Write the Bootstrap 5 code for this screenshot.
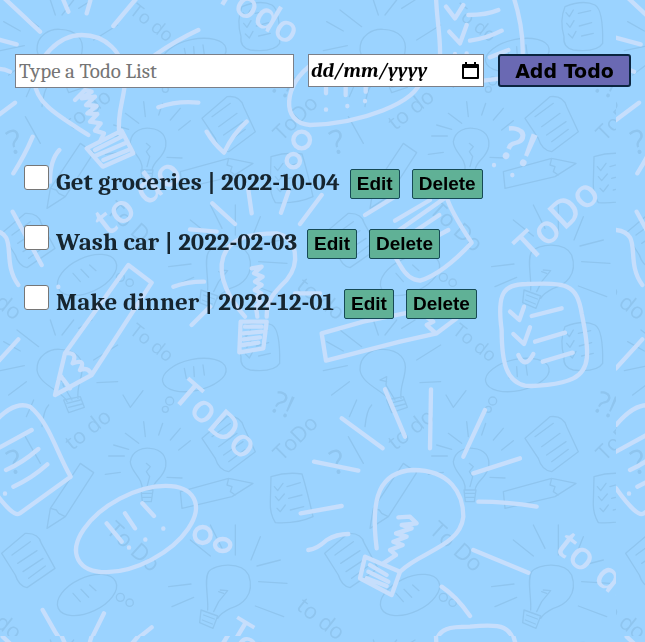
<!DOCTYPE html>
<html lang="en">
<head>
<meta charset="utf-8">
<meta name="viewport" content="width=device-width, initial-scale=1">
<title>Todo List</title>
<link href="https://cdn.jsdelivr.net/npm/bootstrap@5.3.0/dist/css/bootstrap.min.css" rel="stylesheet">
<style>
body { background: #9bd3ff; color: #16252f; font-family: Cambria, "Noto Serif", "Liberation Serif", serif; }
.doodles { z-index: -1; }
.doodles text { font-family: "Open Sans", sans-serif; stroke: none; }
.todo-form { padding: 54px 14px 0 15px; gap: 14px; }
.field { height: 34px; background: #fff; border: 1px solid #7b7f88; border-radius: 0; color: #000; font-size: 21px; line-height: 24px; padding: 1px 3px; outline-offset: 0; }
.field::placeholder { color: #757575; opacity: 1; }
.date-group { width: 176px; height: 33px; background: #fff; border: 1px solid #7b7f88; }
.date-field { min-width: 0; border: 0; padding: 0 0 0 2px; font-size: 20px; font-weight: 700; font-style: italic; color: #000; background: transparent; }
.date-field::placeholder { color: #000; opacity: 1; }
.pick { border: 0; background: transparent; padding: 0 4px 0 0; line-height: 1; }
.add-btn { width: 133px; height: 33px; padding: 0; border: 2px solid #0b2540; border-radius: 3px; background: #6a69b3; color: #000; font: 700 19px/24px "DejaVu Sans", sans-serif; }
.add-btn:hover { background: #5b5aa6; color: #000; }
.todo-list { padding: 76px 14px 0 24px; }
.todo-item { height: 60px; }
.tick { appearance: none; width: 25px; height: 25px; margin: 1px 7px 0 0; background: #fff; border: 1px solid #767676; border-radius: 3px; }
.tick:checked { background: #6a69b3; }
.todo-text { font-size: 25px; line-height: 30px; font-weight: 700; margin: 3px 10px 0 0; }
.act { height: 30px; margin: 5px 12px 0 0; padding: 0 6px; border: 1px solid #164a56; border-radius: 2px; background: #60b196; color: #000; font: 700 19px/26px "Liberation Sans", Arial, sans-serif; }
.act:hover { background: #4f9f85; color: #000; }
</style>
</head>
<body class="min-vh-100">
<svg class="doodles position-fixed top-0 start-0 w-100 h-100" aria-hidden="true">
  <defs>
    <g id="sketch" transform="scale(.333333)">
      <!-- bulb, top left -->
      <path d="M210 245C200 215 125 195 120 150C118 105 160 85 190 88C240 90 262 120 255 155C250 190 240 200 243 235M200 240L250 230L262 262L215 278ZM210 250L250 240M215 262L255 252M180 180L200 170L198 195L225 240M180 180L200 185M20 65L70 93M60 30L125 80M160 0L175 45M230 0L195 45M285 0L245 25M290 120L362 75M300 188L362 185M10 152L82 137M35 225L88 185"/>
      <path d="M735 20Q790 -2 825 15Q850 30 848 130Q830 158 760 150Q728 142 732 110Q718 60 735 20ZM738 38L748 50L760 30M775 40L812 32M740 70L750 82L762 62M778 78L815 68M745 102L757 114L768 94M785 108L820 100"/>
      <ellipse cx="592" cy="165" rx="97" ry="47" transform="rotate(-12 592 165)"/>
      <path d="M562 145L568 175M590 140L592 170M618 135L622 165M378 225L400 262L438 212M110 240L88 290M155 255Q140 270 135 320"/>
      <circle cx="518" cy="243" r="12"/><circle cx="505" cy="268" r="9"/>
      <!-- small bulb -->
      <path d="M435 510C440 475 400 455 400 425C405 390 440 382 460 385C495 388 510 410 506 440C500 475 470 480 465 510M432 510L468 510L463 545L436 545ZM436 520H464M438 532H462M448 430L460 440L448 455L458 470L450 500M440 305L445 350M497 310L485 345M550 325L520 360M580 362L545 390M385 340L425 370M350 375L395 388M335 408H382M325 463L370 457M510 472L555 474"/>
      <path d="M615 355L690 290Q730 285 740 320L775 395L695 455Q665 450 655 415ZM645 350L700 310M665 380L720 340M680 405L738 365M695 425L745 388M85 350L130 430"/>
      <!-- pencils -->
      <path d="M150 625L160 565L250 430L290 458L205 590ZM160 565L178 570L185 580L205 590M550 515L695 475L768 490L705 530L555 565ZM695 475L690 495L705 500L700 515L715 525"/>
      <path d="M822 470Q870 455 915 462Q930 510 948 590Q900 612 835 608Q818 580 820 545ZM832 500L842 512L858 490M870 500L910 488M835 530L845 542L862 522M875 535L915 525M840 565L850 575L865 555M880 570L920 560"/>
      <path d="M14 700L85 640Q125 638 133 670L174 745L90 803Q65 798 55 765ZM45 705L100 665M62 730L120 692M78 755L138 715M95 775L145 738"/>
      <ellipse cx="270" cy="825" rx="95" ry="52" transform="rotate(-25 270 825)"/>
      <path d="M228 820L250 845M252 808L275 832M278 795L297 812"/>
      <circle cx="370" cy="832" r="12"/><circle cx="398" cy="848" r="11"/>
      <!-- bulb, lower right -->
      <path d="M632 870C635 830 620 780 635 755C655 730 735 725 755 765C775 825 735 855 700 865Q670 880 662 895M612 870L662 888L648 925L608 908ZM620 885L652 897M616 900L646 912M670 810L692 812L665 845L650 875M665 815L680 820M640 615L675 685M715 615V705M790 650L762 720M580 660L640 708M780 738L850 720M515 800L582 792M785 785L870 790M525 860L590 832M775 858L860 890"/>
      <g fill="#8fc5ef">
        <text x="395" y="38" font-size="56" transform="rotate(38 395 38)">To do</text>
        <text x="225" y="393" font-size="64" transform="rotate(-38 225 393)">to do</text>
        <text x="815" y="270" font-size="92" transform="rotate(24 815 270)">?!</text>
        <text x="855" y="425" font-size="64" transform="rotate(-45 855 425)">ToDo</text>
        <text x="40" y="465" font-size="100" transform="rotate(-15 40 465)">?</text>
        <text x="325" y="635" font-size="68" transform="rotate(42 325 635)">To Do</text>
        <text x="895" y="865" font-size="66" transform="rotate(38 895 865)">to do</text>
      </g>
    </g>
    <pattern id="wall" x="-8" y="-4" width="624" height="640" patternUnits="userSpaceOnUse">
      <g transform="translate(8 4)" fill="none" stroke-linecap="round" stroke-linejoin="round">
        <g stroke="#8fc5ef" stroke-width="4">
          <use href="#sketch" x="-3" y="-320"/><use href="#sketch" x="320" y="-320"/>
          <use href="#sketch" x="-326"/><use href="#sketch" x="-3"/><use href="#sketch" x="320"/>
          <use href="#sketch" x="-326" y="320"/><use href="#sketch" x="-3" y="320"/><use href="#sketch" x="320" y="320"/>
        </g>
        <g transform="scale(.333333)" stroke="#c6defc" stroke-width="13">
          <g>
            <path d="M8 -10L120 95M-30 112L50 133M185 -12L205 35M275 -12L260 40M415 -12L340 78M465 165Q530 120 595 90M475 322Q530 302 595 308"/>
            <path d="M265 405C180 350 105 310 105 245C110 170 180 105 245 105C310 105 375 150 375 245C372 300 350 340 358 400M260 445L365 392L400 460L308 500ZM285 450L365 410M285 468L375 430M310 480L385 450"/>
            <path d="M225 300L255 270L275 275L245 295L285 290L258 315L290 318L262 340L292 342L270 365L302 370L285 392L312 400L300 425"/>
            <path d="M-24 212Q0 200 30 215M-24 360L45 308M98 410Q75 465 40 520M178 450Q150 480 150 545M620 395Q640 430 672 458Q700 400 740 365"/>
            <path d="M940 190C850 250 840 370 930 375C1080 370 1250 310 1265 235M978 262V280M1037 262V285M1097 262V275M978 328V329M1042 318V319M1095 303V304"/>
            <circle cx="905" cy="420" r="25"/><circle cx="880" cy="482" r="20"/>
          </g>
          <path transform="translate(960)" d="M348 -12C350 60 362 110 360 165M580 -12C600 50 610 100 608 165M378 20L405 55L430 15M445 45Q500 45 535 30M388 95L420 130L440 75M450 122Q500 115 545 92M405 162V170M440 160V170M510 172L565 150M490 242L545 235M522 495V496M577 525V526"/>
          <g transform="translate(0 450)">
            <path d="M38 185L125 345M-24 240C60 250 0 330 55 405M175 410V411M637 160L705 222M745 120L755 190M865 125L843 188M965 135L900 222M570 238L650 245M520 410Q560 395 612 395M575 525L630 470M885 430H960"/>
            <path d="M735 500C690 450 650 380 670 320C690 260 760 250 830 250C895 265 900 340 860 390C820 430 800 450 800 500"/>
            <path d="M755 355L785 350L762 370L788 380L765 395L785 405L764 420L784 430L766 445L782 455L768 470L772 500M722 515L800 515L790 595L718 607ZM735 530H785M730 550L785 545M730 568L780 562M728 585L775 578"/>
          </g>
          <path transform="translate(960 450)" d="M135 195L225 140M380 140Q390 180 455 278Q370 370 300 392Q265 390 240 345L195 270ZM225 212L330 150M268 255L358 195M310 280L385 240"/>
          <g transform="translate(0 960)">
            <path d="M385 -165L195 100L165 225L275 165L455 -112ZM195 100Q235 95 218 130Q260 115 240 150Q265 140 275 165M180 165L210 205M-24 145L55 58"/>
            <path d="M-24 315Q40 240 90 260C150 310 170 400 212 470L60 580Q40 595 -24 505M-24 395L95 330M18 450Q65 430 115 387M40 500Q95 475 142 433M15 520V521"/>
          </g>
          <g transform="translate(960 960)">
            <path d="M545 30C530 -80 550 -108 620 -108C740 -112 770 -110 785 -20C810 100 810 150 760 175C720 195 640 200 615 197C560 185 545 130 545 30ZM570 -25L598 0L612 -40M635 -12L725 -35M580 42L612 72L630 22M645 65L735 38M595 105Q615 150 640 102M668 125L758 98"/>
            <path d="M5 40L130 5L280 -25M5 40L18 122L240 65L350 40L410 -5M345 38L320 15L340 5L318 -10L340 -20M65 295L188 385M195 208L255 350M333 208L330 385M495 270L430 410M460 460L600 415M-18 425L115 452"/>
          </g>
          <g transform="translate(0 1440)">
            <ellipse cx="408" cy="147" rx="196" ry="103" transform="rotate(-28 408 147)"/>
            <path d="M320 130L365 185M375 100L405 145M427 70L462 108M387 202V203M436 178V179M490 145V146M128 390L165 455L188 490M312 400L270 485M455 442L395 490"/>
            <circle cx="608" cy="165" r="24"/><ellipse cx="668" cy="195" rx="23" ry="18"/>
          </g>
          <g transform="translate(960 1440)">
            <path d="M170 205C150 50 180 -25 280 -30C390 -30 430 40 430 110C420 200 300 215 240 275M135 230L240 275L215 345L120 295ZM150 255L200 285M145 275L205 305M140 295L200 318"/>
            <path d="M235 112L270 110L290 130L245 135L275 145L228 160L260 170L220 185L248 195L210 210L228 225L190 250"/>
            <path d="M-58 100L65 78M-35 210Q-10 208 20 180Q50 162 85 162M475 65Q560 65 650 80M460 210L625 278M365 320Q410 350 450 408M350 500C345 440 400 440 450 440C550 430 575 440 585 500"/>
          </g>
          <g fill="#c6defc" font-weight="600">
            <text x="640" y="-2" font-size="112" transform="rotate(31 640 -2)">Todo</text>
            <text x="672" y="1915" font-size="112" transform="rotate(31 672 1915)">T</text>
            <text x="322" y="712" font-size="118" transform="rotate(-38 322 712)">to do</text>
            <text x="1490" y="465" font-size="140" transform="rotate(22 1490 465)">?!</text>
            <text x="1590" y="790" font-size="118" transform="rotate(-43 1590 790)">ToDo</text>
            <text x="512" y="1192" font-size="116" transform="rotate(41 512 1192)">ToDo</text>
            <text x="1660" y="1650" font-size="116" transform="rotate(38 1660 1650)">to do</text>
          </g>
        </g>
      </g>
    </pattern>
  </defs>
  <rect width="100%" height="100%" fill="url(#wall)"/>
</svg>

<main>
  <form class="todo-form d-flex align-items-start">
    <input class="field flex-grow-1" type="text" placeholder="Type a Todo List" aria-label="Todo" size="10">
    <div class="date-group d-flex align-items-center flex-shrink-0">
      <input class="date-field flex-grow-1" type="text" placeholder="dd/mm/yyyy" aria-label="Due date" size="8">
      <button class="pick" type="button" aria-label="Choose date">
        <svg width="17" height="19" viewBox="0 0 17 19"><path d="M3 1h2v2h7V1h2v2h2q1 0 1 1v13q0 1-1 1H1q-1 0-1-1V4q0-1 1-1h2ZM2 7v9h13V7Z" fill="#000"/></svg>
      </button>
    </div>
    <button class="btn add-btn flex-shrink-0" type="submit">Add Todo</button>
  </form>

  <ul class="todo-list list-unstyled mb-0">
    <li class="todo-item d-flex align-items-start">
      <input class="tick flex-shrink-0" type="checkbox" id="t1">
      <label class="todo-text" for="t1">Get groceries | 2022-10-04</label>
      <button class="btn act" type="button">Edit</button>
      <button class="btn act" type="button">Delete</button>
    </li>
    <li class="todo-item d-flex align-items-start">
      <input class="tick flex-shrink-0" type="checkbox" id="t2">
      <label class="todo-text" for="t2">Wash car | 2022-02-03</label>
      <button class="btn act" type="button">Edit</button>
      <button class="btn act" type="button">Delete</button>
    </li>
    <li class="todo-item d-flex align-items-start">
      <input class="tick flex-shrink-0" type="checkbox" id="t3">
      <label class="todo-text" for="t3">Make dinner | 2022-12-01</label>
      <button class="btn act" type="button">Edit</button>
      <button class="btn act" type="button">Delete</button>
    </li>
  </ul>
</main>
<script src="https://cdn.jsdelivr.net/npm/bootstrap@5.3.0/dist/js/bootstrap.bundle.min.js"></script>
</body>
</html>
